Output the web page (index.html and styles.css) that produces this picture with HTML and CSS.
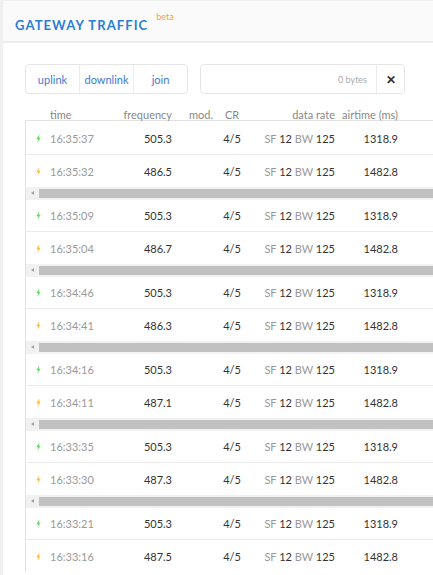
FILE: index.html
```html
<!DOCTYPE html>
<html>
<head>
<meta charset="utf-8">
<link rel="stylesheet" href="styles.css">
</head>
<body>
<div class="card">
  <div class="card-header">
    <h1 class="title">Gateway Traffic<sup class="beta">beta</sup></h1>
  </div>
  <div class="card-body">
    <div class="controls">
      <div class="btn-group">
        <div class="btn">uplink</div>
        <div class="btn">downlink</div>
        <div class="btn">join</div>
      </div>
      <div class="search">
        <div class="bytes">0 bytes</div>
        <div class="clear">&#x2715;</div>
      </div>
    </div>
    <div class="row head">
      <div></div>
      <div class="c-time">time</div>
      <div class="c-freq">frequency</div>
      <div class="c-mod">mod.</div>
      <div class="c-cr">CR</div>
      <div class="c-rate">data rate</div>
      <div class="c-air">airtime (ms)</div>
    </div>
    <div class="table">
      <div class="group">
        <div class="row"><div class="c-icon"><svg class="bolt up" viewBox="0 0 6 10"><path d="M4.2 0 L0.3 5.8 H2.6 L1.6 10 L5.7 4 H3.4 Z"/></svg></div><div class="c-time">16:35:37</div><div class="c-freq">505.3</div><div class="c-mod"></div><div class="c-cr">4/5</div><div class="c-rate"><span class="dim">SF</span> 12 <span class="dim">BW</span> 125</div><div class="c-air">1318.9</div></div>
        <div class="row"><div class="c-icon"><svg class="bolt down" viewBox="0 0 6 10"><path d="M4.2 0 L0.3 5.8 H2.6 L1.6 10 L5.7 4 H3.4 Z"/></svg></div><div class="c-time">16:35:32</div><div class="c-freq">486.5</div><div class="c-mod"></div><div class="c-cr">4/5</div><div class="c-rate"><span class="dim">SF</span> 12 <span class="dim">BW</span> 125</div><div class="c-air">1482.8</div></div>
        <div class="hscroll"><div class="arrow"></div><div class="thumb"></div></div>
      </div>
      <div class="group">
        <div class="row"><div class="c-icon"><svg class="bolt up" viewBox="0 0 6 10"><path d="M4.2 0 L0.3 5.8 H2.6 L1.6 10 L5.7 4 H3.4 Z"/></svg></div><div class="c-time">16:35:09</div><div class="c-freq">505.3</div><div class="c-mod"></div><div class="c-cr">4/5</div><div class="c-rate"><span class="dim">SF</span> 12 <span class="dim">BW</span> 125</div><div class="c-air">1318.9</div></div>
        <div class="row"><div class="c-icon"><svg class="bolt down" viewBox="0 0 6 10"><path d="M4.2 0 L0.3 5.8 H2.6 L1.6 10 L5.7 4 H3.4 Z"/></svg></div><div class="c-time">16:35:04</div><div class="c-freq">486.7</div><div class="c-mod"></div><div class="c-cr">4/5</div><div class="c-rate"><span class="dim">SF</span> 12 <span class="dim">BW</span> 125</div><div class="c-air">1482.8</div></div>
        <div class="hscroll"><div class="arrow"></div><div class="thumb"></div></div>
      </div>
      <div class="group">
        <div class="row"><div class="c-icon"><svg class="bolt up" viewBox="0 0 6 10"><path d="M4.2 0 L0.3 5.8 H2.6 L1.6 10 L5.7 4 H3.4 Z"/></svg></div><div class="c-time">16:34:46</div><div class="c-freq">505.3</div><div class="c-mod"></div><div class="c-cr">4/5</div><div class="c-rate"><span class="dim">SF</span> 12 <span class="dim">BW</span> 125</div><div class="c-air">1318.9</div></div>
        <div class="row"><div class="c-icon"><svg class="bolt down" viewBox="0 0 6 10"><path d="M4.2 0 L0.3 5.8 H2.6 L1.6 10 L5.7 4 H3.4 Z"/></svg></div><div class="c-time">16:34:41</div><div class="c-freq">486.3</div><div class="c-mod"></div><div class="c-cr">4/5</div><div class="c-rate"><span class="dim">SF</span> 12 <span class="dim">BW</span> 125</div><div class="c-air">1482.8</div></div>
        <div class="hscroll"><div class="arrow"></div><div class="thumb"></div></div>
      </div>
      <div class="group">
        <div class="row"><div class="c-icon"><svg class="bolt up" viewBox="0 0 6 10"><path d="M4.2 0 L0.3 5.8 H2.6 L1.6 10 L5.7 4 H3.4 Z"/></svg></div><div class="c-time">16:34:16</div><div class="c-freq">505.3</div><div class="c-mod"></div><div class="c-cr">4/5</div><div class="c-rate"><span class="dim">SF</span> 12 <span class="dim">BW</span> 125</div><div class="c-air">1318.9</div></div>
        <div class="row"><div class="c-icon"><svg class="bolt down" viewBox="0 0 6 10"><path d="M4.2 0 L0.3 5.8 H2.6 L1.6 10 L5.7 4 H3.4 Z"/></svg></div><div class="c-time">16:34:11</div><div class="c-freq">487.1</div><div class="c-mod"></div><div class="c-cr">4/5</div><div class="c-rate"><span class="dim">SF</span> 12 <span class="dim">BW</span> 125</div><div class="c-air">1482.8</div></div>
        <div class="hscroll"><div class="arrow"></div><div class="thumb"></div></div>
      </div>
      <div class="group">
        <div class="row"><div class="c-icon"><svg class="bolt up" viewBox="0 0 6 10"><path d="M4.2 0 L0.3 5.8 H2.6 L1.6 10 L5.7 4 H3.4 Z"/></svg></div><div class="c-time">16:33:35</div><div class="c-freq">505.3</div><div class="c-mod"></div><div class="c-cr">4/5</div><div class="c-rate"><span class="dim">SF</span> 12 <span class="dim">BW</span> 125</div><div class="c-air">1318.9</div></div>
        <div class="row"><div class="c-icon"><svg class="bolt down" viewBox="0 0 6 10"><path d="M4.2 0 L0.3 5.8 H2.6 L1.6 10 L5.7 4 H3.4 Z"/></svg></div><div class="c-time">16:33:30</div><div class="c-freq">487.3</div><div class="c-mod"></div><div class="c-cr">4/5</div><div class="c-rate"><span class="dim">SF</span> 12 <span class="dim">BW</span> 125</div><div class="c-air">1482.8</div></div>
        <div class="hscroll"><div class="arrow"></div><div class="thumb"></div></div>
      </div>
      <div class="group">
        <div class="row"><div class="c-icon"><svg class="bolt up" viewBox="0 0 6 10"><path d="M4.2 0 L0.3 5.8 H2.6 L1.6 10 L5.7 4 H3.4 Z"/></svg></div><div class="c-time">16:33:21</div><div class="c-freq">505.3</div><div class="c-mod"></div><div class="c-cr">4/5</div><div class="c-rate"><span class="dim">SF</span> 12 <span class="dim">BW</span> 125</div><div class="c-air">1318.9</div></div>
        <div class="row"><div class="c-icon"><svg class="bolt down" viewBox="0 0 6 10"><path d="M4.2 0 L0.3 5.8 H2.6 L1.6 10 L5.7 4 H3.4 Z"/></svg></div><div class="c-time">16:33:16</div><div class="c-freq">487.5</div><div class="c-mod"></div><div class="c-cr">4/5</div><div class="c-rate"><span class="dim">SF</span> 12 <span class="dim">BW</span> 125</div><div class="c-air">1482.8</div></div>
      </div>
    </div>
  </div>
</div>
</body>
</html>
```

FILE: styles.css
```css
html, body {
  margin: 0;
  padding: 0;
  background: #f0f0f0;
  overflow: hidden;
  font-family: Lato, "Open Sans", sans-serif;
}

.card {
  margin: 1px 0 0 3px;
  width: 520px;
  background: #ffffff;
  min-height: 600px;
}

.card-header {
  height: 40px;
  background: #fafafa;
  border-bottom: 2px solid #ececec;
  display: flex;
  align-items: center;
  padding-left: 12px;
}

.title {
  margin: 0;
  font-size: 13px;
  font-weight: 700;
  letter-spacing: 1.1px;
  text-transform: uppercase;
  color: #2a7ed3;
  line-height: 1;
  padding-top: 1px;
}

.beta {
  font-size: 9px;
  font-weight: 400;
  letter-spacing: 0;
  text-transform: none;
  color: #f3a533;
  margin-left: 8px;
  vertical-align: 10px;
}

.card-body {
  padding: 21px 0 0 22px;
}

.controls {
  display: flex;
  gap: 12px;
  height: 30px;
}

.btn-group {
  display: flex;
  width: 163px;
  border: 1px solid #e6e6e6;
  border-radius: 4px;
  box-sizing: border-box;
}

.btn {
  flex: 1;
  display: flex;
  align-items: center;
  justify-content: center;
  font-size: 11px;
  color: #3d7ad2;
  border-left: 1px solid #ececec;
}

.btn:first-child {
  border-left: none;
}

.search {
  width: 205px;
  border: 1px solid #e6e6e6;
  border-radius: 4px;
  box-sizing: border-box;
  display: flex;
  justify-content: flex-end;
}

.bytes {
  display: flex;
  align-items: center;
  font-size: 9px;
  color: #aaaaaa;
  padding-right: 9px;
}

.clear {
  width: 27px;
  display: flex;
  align-items: center;
  justify-content: center;
  font-size: 12px;
  font-weight: 700;
  color: #333;
  border-left: 1px solid #ececec;
}

.row {
  display: grid;
  grid-template-columns: 24px 60px 62px 44px 32px 87px 63px 1fr;
  align-items: center;
  height: 32px;
  font-size: 11px;
  color: #333;
  border-bottom: 1px solid #ececec;
  box-sizing: border-box;
}

.row.head {
  height: 14px;
  margin-top: 13px;
  margin-bottom: -1px;
  border-bottom: none;
  color: #888;
  padding-left: 1px;
}

.table {
  border-top: 1px solid #e2e2e2;
  border-left: 1px solid #e2e2e2;
  padding-top: 2px;
}

.group .row:nth-child(2) {
  border-bottom: none;
}

.c-icon {
  padding-left: 10px;
  display: flex;
  align-items: center;
}

.bolt {
  width: 5px;
  height: 9px;
}

.bolt.up { fill: #6cd96c; }
.bolt.down { fill: #fbc04a; }

.c-time { color: #999; }
.row.head .c-time { color: #888; }
.c-freq { text-align: right; }
.c-mod { padding-left: 17px; }
.c-cr { text-align: center; }
.c-rate { text-align: right; }
.c-air { text-align: right; }

.dim { color: #999; }

.hscroll {
  height: 13px;
  background: #f1f1f1;
  display: flex;
}

.arrow {
  width: 13px;
  position: relative;
}

.arrow::before {
  content: "";
  position: absolute;
  left: 5px;
  top: 4px;
  border-top: 2.5px solid transparent;
  border-bottom: 2.5px solid transparent;
  border-right: 3px solid #a3a3a3;
}

.thumb {
  flex: 1;
  margin: 2px 0;
  background: #c1c1c1;
}
```
